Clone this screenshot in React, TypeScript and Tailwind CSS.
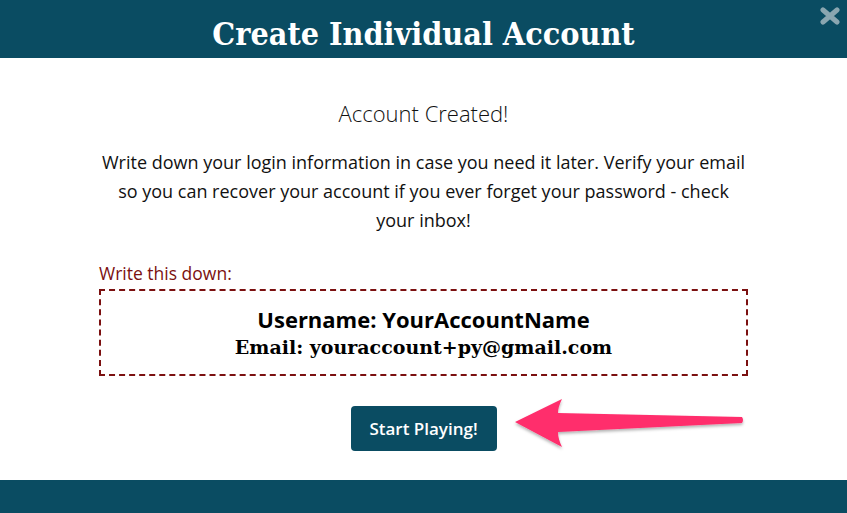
export default function App() {
  return (
    <div className="w-[847px] h-[513px] bg-white flex flex-col overflow-hidden font-['Open_Sans','Noto_Sans',sans-serif]">
      <header className="relative h-[58px] shrink-0 bg-[#0a4c62] flex items-center justify-center">
        <h1 className="text-white text-[32px] leading-none font-bold font-['DejaVu_Serif_Condensed','DejaVu_Serif',serif] pt-[10px]">
          Create Individual Account
        </h1>
        <svg className="absolute right-[7px] top-[7px]" width="20" height="18" viewBox="0 0 20 18" aria-hidden="true">
          <path d="M3 3 L17 15 M17 3 L3 15" stroke="#8aa6b0" strokeWidth="5" strokeLinecap="round" />
        </svg>
      </header>

      <main className="flex-1 flex flex-col items-center px-[99px]">
        <div className="mt-[40px] text-[22px] leading-[30px] font-light text-[#111]">Account Created!</div>
        <p className="mt-[20px] text-[18px] leading-[29px] text-[#111] text-center whitespace-nowrap">
          Write down your login information in case you need it later. Verify your email
          <br />
          so you can recover your account if you ever forget your password - check
          <br />
          your inbox!
        </p>
        <div className="self-stretch mt-[28px]">
          <div className="text-[17.5px] leading-[20px] text-[#7b1010]">Write this down:</div>
          <div className="mt-[6px] h-[87px] border-[2px] border-dashed border-[#7b1010] flex flex-col items-center justify-center">
            <div className="text-[22px] leading-[28px] font-bold text-black">Username: YourAccountName</div>
            <div className="text-[19px] leading-[28px] font-bold text-black font-['DejaVu_Serif',serif]">
              Email: youraccount+py@gmail.com
            </div>
          </div>
        </div>
        <div className="relative mt-[30px]">
          <button className="h-[45px] w-[146px] rounded-[4px] bg-[#0a4c62] text-white text-[17px] font-semibold">
            Start Playing!
          </button>
          <svg className="absolute left-[160px] top-[-10px]" width="236" height="62" viewBox="0 0 236 62" aria-hidden="true">
            <defs>
              <filter id="sh" x="-10%" y="-20%" width="120%" height="160%">
                <feDropShadow dx="0" dy="2" stdDeviation="1.5" floodColor="#000" floodOpacity="0.3" />
              </filter>
            </defs>
            <path
              d="M4 26 L51 3 Q47 11 47 17 L231 21 Q233 24 231 27 L47 36 Q47 43 51 51 Z"
              fill="#ff2d6c"
              filter="url(#sh)"
            />
          </svg>
        </div>
      </main>

      <footer className="h-[33px] shrink-0 bg-[#0a4c62]" />
    </div>
  );
}
